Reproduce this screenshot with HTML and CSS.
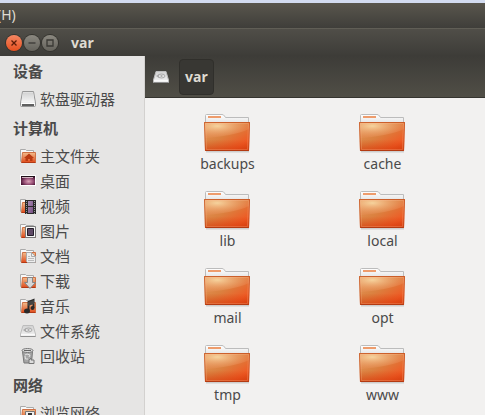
FILE: index.html
```html
<!DOCTYPE html>
<html lang="zh-CN">
<head>
<meta charset="utf-8">
<title>var</title>
<link rel="stylesheet" href="styles.css">
</head>
<body>
<svg class="defs" width="0" height="0" aria-hidden="true">
  <defs>
    <linearGradient id="front" x1="0" y1="0" x2="1" y2="1">
      <stop offset="0" stop-color="#e39a5c"/><stop offset=".45" stop-color="#db8140"/><stop offset=".8" stop-color="#ee5a24"/><stop offset="1" stop-color="#dc4413"/>
    </linearGradient>
    <radialGradient id="glow" cx=".28" cy=".2" r=".75">
      <stop offset="0" stop-color="#f8dba6" stop-opacity=".9"/><stop offset="1" stop-color="#f29a6a" stop-opacity=".2"/>
    </radialGradient>
    <linearGradient id="shade" x1="0" y1="0" x2="0" y2="1">
      <stop offset=".6" stop-color="#d83a08" stop-opacity="0"/><stop offset="1" stop-color="#cf3608" stop-opacity=".6"/>
    </linearGradient>
    <linearGradient id="paper" x1="0" y1="0" x2="0" y2="1">
      <stop offset="0" stop-color="#fff"/><stop offset="1" stop-color="#dcdcdc"/>
    </linearGradient>
    <linearGradient id="small" x1="0" y1="0" x2="0" y2="1">
      <stop offset="0" stop-color="#f2bd8c"/><stop offset="1" stop-color="#e04a1b"/>
    </linearGradient>
    <linearGradient id="metal" x1="0" y1="0" x2="0" y2="1">
      <stop offset="0" stop-color="#d2d2d2"/><stop offset="1" stop-color="#f4f4f4"/>
    </linearGradient>
    <radialGradient id="wall" cx=".55" cy=".6" r=".6">
      <stop offset="0" stop-color="#dba6b8"/><stop offset=".5" stop-color="#a0587e"/><stop offset="1" stop-color="#471433"/>
    </radialGradient>
    <linearGradient id="film" x1="0" y1="0" x2="1" y2="1">
      <stop offset="0" stop-color="#a88bb2"/><stop offset="1" stop-color="#775083"/>
    </linearGradient>
  </defs>
  <symbol id="folder" viewBox="0 0 48 40">
    <path d="M2 37h43v1.500H2z" fill="#000" opacity=".15"/>
    <path d="M1.500 12V1.500Q1.500.5 2.500.5H18Q19.500.5 20.500 2L21.500 3.500H44.500V12z" fill="url(#paper)" stroke="#bcbcbc"/>
    <path d="M4 2h13v2H4z" fill="#ee9c6c"/>
    <path d="M0 8H46L45 37H1z" fill="url(#front)"/>
    <path d="M0 8H46L45 37H1z" fill="url(#shade)"/>
    <path d="M1 9H45V15Q30 22 1 24z" fill="url(#glow)"/>
    <path d="M.5 8.500H45.500L44.500 36.500H1.500z" fill="none" stroke="#c14a1c" opacity=".65"/>
    <path d="M1.500 36.500H44.500" stroke="#b33a12"/>
    <path d="M1.500 9.500H44.500L43.500 35.500H2.500z" fill="none" stroke="#ffc39c" opacity=".25"/>
  </symbol>
  <symbol id="base" viewBox="0 0 16 16">
    <path d="M.5 13.500V1.500H5.500L6.500 2.500H13.500V13.500z" fill="#f8f8f8" stroke="#aaa"/>
    <path d="M2.500 4.500H15.500V14.500H1.500z" fill="url(#small)" stroke="#cf7044"/>
    <path d="M1.500 14.500H15.500" stroke="#b33813"/>
  </symbol>
  <symbol id="home" viewBox="0 0 16 16">
    <use href="#base"/><path d="M9 5.500L14 10H12.500V13H10V11H8V13H5.500V10H4z" fill="#b93a12"/>
  </symbol>
  <symbol id="floppy" viewBox="0 0 16 16">
    <path d="M2.500.5H13.500L15.500 12V14.500Q15.500 15.500 14.500 15.500H1.500Q.5 15.500.5 14.500V12z" fill="#eee" stroke="#969696"/>
    <path d="M3 1.500H13L14.500 11H1.500z" fill="url(#metal)"/><path d="M1 12.500H15" stroke="#fff"/><path d="M2 14H14" stroke="#303030" stroke-width="1.500"/>
  </symbol>
  <symbol id="desktop" viewBox="0 0 16 16">
    <path d="M0 2H16V13H0z" fill="#fff"/><path d="M1 3H15V12H1z" fill="url(#wall)"/><path d="M1 3.500H15" stroke="#1e1018"/><path d="M2 4H13V5H2z" fill="#efd7df" opacity=".8"/>
  </symbol>
  <symbol id="video" viewBox="0 0 16 16">
    <use href="#base"/><path d="M5 2H16V16H5z" fill="#292929"/><path d="M8 3H13V8H8zM8 9H13V15H8z" fill="url(#film)"/><path d="M6.500 3V16M14.500 3V16" stroke="#999" stroke-dasharray="1 1"/>
  </symbol>
  <symbol id="picture" viewBox="0 0 16 16">
    <use href="#base"/><path d="M5.500 3.500H15.500V14.500H5.500z" fill="#f7f7f7" stroke="#777"/><path d="M7.500 5.500H13.500V12.500H7.500z" fill="#5f4a66" stroke="#221d29"/>
  </symbol>
  <symbol id="document" viewBox="0 0 16 16">
    <use href="#base"/><path d="M6.500 4.500H11.500L15.500 8.500V14.500H7.500L6.500 13.500z" fill="#eee" stroke="#aaa"/><path d="M11.500 5V8.500H15" fill="none" stroke="#aaa"/><path d="M8 8.500H10M8 10.500H14M8 12.500H14" stroke="#bbb"/>
  </symbol>
  <symbol id="download" viewBox="0 0 16 16">
    <use href="#base"/><path d="M7.500 4.500H12.500V9.500H15.500L10 15.500L4.500 9.500H7.500z" fill="#d6d6d6" stroke="#858585"/>
  </symbol>
  <symbol id="music" viewBox="0 0 16 16">
    <use href="#base"/><path d="M8.500 12V4L13.500 2V10" fill="none" stroke="#292929" stroke-width="2"/><path d="M8 4L14 2V6L8 8z" fill="#444"/><ellipse cx="7" cy="13" rx="3" ry="2.500" fill="#292929"/><ellipse cx="12.500" cy="10" rx="2" ry="2" fill="#292929"/>
  </symbol>
  <symbol id="drive" viewBox="0 0 16 16">
    <path d="M3 2.500H13L15.500 11V13.500H.5V11z" fill="url(#metal)" stroke="#bdbdbd"/><path d="M.5 13.500H15.500" stroke="#8f8f8f"/>
    <ellipse cx="8.500" cy="7" rx="3.500" ry="2" fill="none" stroke="#aaa"/><path d="M3 7L6 5V9z" fill="#aaa"/><circle cx="8.500" cy="7" r="1" fill="#aaa"/><path d="M1 11.500H15" stroke="#fafafa"/>
  </symbol>
  <symbol id="trash" viewBox="0 0 16 16">
    <path d="M2.500 3.500H12.500L11.500 15H4z" fill="#a5a5a5" stroke="#777"/><ellipse cx="7.500" cy="2.500" rx="5.500" ry="2" fill="#ddd" stroke="#777"/><path d="M4 2.500H11" stroke="#666"/>
    <path d="M5 7L7 6L10 7L9 9M5 8L5.500 11H8" fill="none" stroke="#e5e5e5"/><path d="M9 12L11 10V12H14V15.500H9z" fill="#ddd" stroke="#777"/>
  </symbol>
  <symbol id="network" viewBox="0 0 16 16">
    <use href="#base"/><path d="M5.500 6.500H14.500V13.500H5.500z" fill="#eee" stroke="#777"/><path d="M8 8H12V12H8z" fill="#333"/>
  </symbol>
</svg>
<div class="window">
  <div class="desktop-edge"></div>
  <nav class="menubar"><button type="button">(H)</button></nav>
  <header class="titlebar">
    <button type="button" class="control close" aria-label="关闭"><svg viewBox="0 0 16 16"><path d="M5.500 5.500L10.500 10.500M10.500 5.500L5.500 10.500"/></svg></button>
    <button type="button" class="control" aria-label="最小化"><svg viewBox="0 0 16 16"><path d="M4.500 8H11.500"/></svg></button>
    <button type="button" class="control" aria-label="最大化"><svg viewBox="0 0 16 16"><path d="M5 5H11V11H5z"/></svg></button>
    <h1>var</h1>
  </header>
  <div class="content">
    <aside class="sidebar">
      <h2>设备</h2>
      <a href="#"><svg class="icon"><use href="#floppy"/></svg>软盘驱动器</a>
      <h2>计算机</h2>
      <a href="#"><svg class="icon"><use href="#home"/></svg>主文件夹</a>
      <a href="#"><svg class="icon"><use href="#desktop"/></svg>桌面</a>
      <a href="#"><svg class="icon"><use href="#video"/></svg>视频</a>
      <a href="#"><svg class="icon"><use href="#picture"/></svg>图片</a>
      <a href="#"><svg class="icon"><use href="#document"/></svg>文档</a>
      <a href="#"><svg class="icon"><use href="#download"/></svg>下载</a>
      <a href="#"><svg class="icon"><use href="#music"/></svg>音乐</a>
      <a href="#"><svg class="icon"><use href="#drive"/></svg>文件系统</a>
      <a href="#"><svg class="icon"><use href="#trash"/></svg>回收站</a>
      <h2>网络</h2>
      <a href="#"><svg class="icon"><use href="#network"/></svg>浏览网络</a>
    </aside>
    <main>
      <nav class="pathbar">
        <button type="button" class="root" aria-label="文件系统"><svg class="icon"><use href="#drive"/></svg></button>
        <button type="button" class="current">var</button>
      </nav>
      <div class="files">
        <a href="#"><svg><use href="#folder"/></svg>backups</a>
        <a href="#"><svg><use href="#folder"/></svg>cache</a>
        <a href="#"><svg><use href="#folder"/></svg>lib</a>
        <a href="#"><svg><use href="#folder"/></svg>local</a>
        <a href="#"><svg><use href="#folder"/></svg>mail</a>
        <a href="#"><svg><use href="#folder"/></svg>opt</a>
        <a href="#"><svg><use href="#folder"/></svg>tmp</a>
        <a href="#"><svg><use href="#folder"/></svg>www</a>
      </div>
    </main>
  </div>
</div>
</body>
</html>
```
FILE: styles.css
```css
* { box-sizing: border-box; }
body {
  margin: 0;
  font: 15px/20px "Noto Sans", "Noto Sans CJK SC", sans-serif;
  color: #4a4a4a;
}
button { border: 0; padding: 0; background: none; font: inherit; color: inherit; }
a { color: inherit; text-decoration: none; }
h1, h2 { margin: 0; font-size: 15px; font-weight: 700; }
.defs { position: absolute; }
.window { display: flex; flex-direction: column; height: 100vh; overflow: hidden; background: #f2f1f0; }
.desktop-edge { height: 3px; flex: none; background: #d3dcf0; }
.menubar {
  display: flex;
  align-items: center;
  height: 25px;
  flex: none;
  padding-bottom: 2px;
  background: linear-gradient(#59564d, #3f3e3a);
  color: #dfdbd2;
  font-size: 14px;
}
.menubar button { margin-left: -3px; }
.titlebar {
  display: flex;
  align-items: center;
  gap: 2px;
  height: 28px;
  flex: none;
  padding-left: 6px;
  border-top: 1px solid #605e56;
  background: linear-gradient(#504e48, #3d3c38);
  color: #dfdbd2;
}
.titlebar h1 { margin-left: 11px; font-size: 14px; }
.control {
  width: 16px;
  height: 16px;
  border-radius: 50%;
  background: linear-gradient(#8b8880, #65635c);
  box-shadow: 0 0 0 1px #35342f;
}
.control svg { display: block; width: 16px; height: 16px; fill: none; stroke: #3a3935; stroke-width: 1.3; }
.close { background: linear-gradient(#f58763, #e7501f); }
.close svg { stroke: #5c1c08; }
.content { display: flex; flex: 1; min-height: 0; }
.sidebar { width: 145px; flex: none; border-right: 1px solid #d3d1cf; background: #e6e5e4; overflow: hidden; }
.sidebar h2 { height: 32px; padding-left: 13px; line-height: 30px; }
.sidebar a {
  display: flex;
  align-items: center;
  gap: 4px;
  height: 25px;
  padding: 0 0 3px 20px;
  white-space: nowrap;
}
.icon { width: 16px; height: 16px; flex: none; display: block; }
main { flex: 1; min-width: 0; overflow: hidden; }
.pathbar {
  display: flex;
  align-items: center;
  gap: 10px;
  height: 42px;
  padding-left: 8px;
  border-bottom: 1px solid #35342f;
  background: linear-gradient(#3d3c38, #504e46);
  color: #dfdbd2;
}
.current {
  height: 36px;
  padding: 0 5px;
  border: 1px solid #302f2b;
  border-radius: 4px;
  background: #383733;
  font-size: 14px;
  font-weight: 700;
}
.files { display: grid; grid-template-columns: repeat(auto-fill, 155px); grid-auto-rows: 77px; padding: 16px 0 0 5px; }
.files a { display: flex; flex-direction: column; align-items: center; font-size: 14px; }
.files svg { width: 48px; height: 40px; }
```
